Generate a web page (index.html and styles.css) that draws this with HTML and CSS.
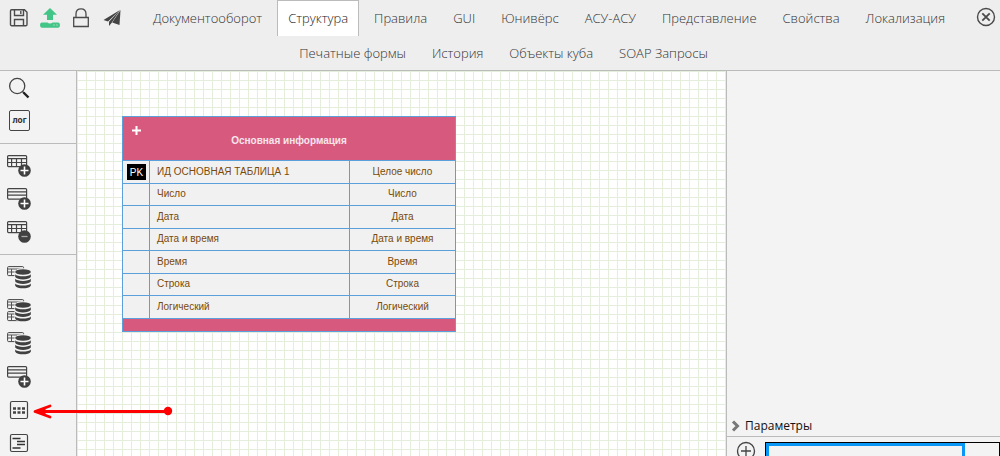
FILE: index.html
```
<!DOCTYPE html>
<html lang="ru">
<head>
<meta charset="utf-8">
<title>Структура</title>
<link rel="stylesheet" href="styles.css">
</head>
<body>
<svg class="defs" aria-hidden="true">
  <defs>
    <g id="grid-table" fill="none" stroke="#444" stroke-width="1.2">
      <rect x=".6" y="1.6" width="19" height="11" rx="1"/>
      <path d="M.6 4.6h19M.6 8.5h19M4.6 5v7.500M9.500 5v7.500M14.500 5v7.500"/>
    </g>
    <g id="row-table" fill="none" stroke="#444" stroke-width="1.2">
      <rect x=".6" y="1.6" width="19" height="10.500" rx="1"/>
      <path d="M.6 4.800h19M.6 8.200h19"/>
    </g>
    <g id="small-table">
      <rect x=".6" y=".6" width="16" height="9" rx="1" fill="#f3f3f3" stroke="#444"/>
      <path d="M.6 3h16M.6 6h16M4.500 3v6M9.500 3v6M13.500 3v6" fill="none" stroke="#555"/>
    </g>
    <g id="plus-badge">
      <circle cx="17.500" cy="16.500" r="6.300" fill="#404040"/>
      <path d="M17.500 12.500v8M13.500 16.500h8" stroke="#fff" stroke-width="1.600"/>
    </g>
    <g id="db">
      <path d="M7.500 6c0-5 16.500-5 16.500 0v13c0 5-16.500 5-16.500 0z" fill="#f3f3f3"/>
      <ellipse cx="16" cy="6" rx="7.800" ry="2.700" fill="#404040"/>
      <path d="M8.200 8.200c2 2.800 13.600 2.800 15.600 0v2.800c-2 3.300-13.600 3.300-15.600 0zM8.200 12.800c2 2.800 13.600 2.800 15.600 0v2.800c-2 3.300-13.600 3.300-15.600 0zM8.200 17.400c2 2.800 13.600 2.800 15.600 0v2.300c-2 3.500-13.600 3.500-15.600 0z" fill="#404040"/>
    </g>
  </defs>
</svg>
<header class="topbar">
  <div class="tools">
    <button class="tool" aria-label="Сохранить"><svg viewBox="0 0 20 20" width="20" height="20" fill="none" stroke="#4a4a4a" stroke-width="1.400"><path d="M2.500 1.700h13l2.500 2.500v12.200q0 1.300-1.300 1.300H2.800q-1.300 0-1.300-1.300V3q0-1.300 1-1.300zM5.500 2v5.500h9V2M11.800 3v3M5.500 17.500v-6h9v6"/></svg></button>
    <button class="tool" aria-label="Загрузить"><svg viewBox="0 0 20 20" width="20" height="20" fill="#43c588"><path d="M10 0l7 6.800h-4V12H7V6.800H3z"/><path fill-rule="evenodd" d="M1.800 14.500h5.700q.8 1 2.500 1t2.500-1h5.700q1.800 0 1.800 2.500t-1.800 2.700H1.800Q0 19.500 0 17t1.800-2.500zM13.500 16.500v1h1v-1zM16.500 16.500v1h1v-1z"/></svg></button>
    <button class="tool" aria-label="Заблокировать"><svg viewBox="0 0 20 20" width="20" height="20" fill="none" stroke="#4a4a4a" stroke-width="1.300"><path d="M2.700 9.500h14.600v9H2.700zM5 9.500V6C5 2.500 7 .8 10 .8S15 2.500 15 6v3.500"/></svg></button>
    <button class="tool" aria-label="Отправить"><svg viewBox="0 0 20 20" width="20" height="20" fill="#444"><path d="M18 2L1.500 12l4.500 1.600zM18 2L7 13.800V18l2.500-3z"/><path d="M18.500 2l-8.300 12.500 7.300 2.500z"/></svg></button>
  </div>
  <nav class="tabs">
    <a class="tab" href="#">Документооборот</a>
    <a class="tab active" href="#" aria-current="page">Структура</a>
    <a class="tab" href="#">Правила</a>
    <a class="tab" href="#">GUI</a>
    <a class="tab" href="#">Юнивёрс</a>
    <a class="tab" href="#">АСУ-АСУ</a>
    <a class="tab" href="#">Представление</a>
    <a class="tab" href="#">Свойства</a>
    <a class="tab" href="#">Локализация</a>
  </nav>
  <button class="tool close" aria-label="Закрыть"><svg viewBox="0 0 20 20" width="20" height="20" fill="none" stroke="#4a4a4a" stroke-width="1.400"><circle cx="10" cy="10" r="8.500"/><path d="M6.300 6.300l7.400 7.400M13.700 6.300l-7.400 7.400" stroke-width="1.800"/></svg></button>
  <nav class="tabs second">
    <a class="tab" href="#">Печатные формы</a>
    <a class="tab" href="#">История</a>
    <a class="tab" href="#">Объекты куба</a>
    <a class="tab" href="#">SOAP Запросы</a>
  </nav>
</header>
<main class="workspace">
  <aside class="sidebar">
    <div class="group">
      <button class="side" aria-label="Поиск"><svg viewBox="0 0 24 24" width="24" height="24" fill="none"><circle cx="10.200" cy="10" r="7.600" stroke="#444" stroke-width="1.300"/><path d="M15.500 15.500l1.500 1.500" stroke="#444" stroke-width="1.500"/><path d="M16.500 16.500l5 5" stroke="#222" stroke-width="2.400"/></svg></button>
      <button class="side"><span class="log">лог</span></button>
    </div>
    <div class="group">
      <button class="side" aria-label="Добавить таблицу"><svg viewBox="0 0 24 24" width="24" height="24"><use href="#grid-table"/><use href="#plus-badge"/></svg></button>
      <button class="side" aria-label="Добавить строку"><svg viewBox="0 0 24 24" width="24" height="24"><use href="#row-table"/><use href="#plus-badge"/></svg></button>
      <button class="side" aria-label="Удалить таблицу"><svg viewBox="0 0 24 24" width="24" height="24"><use href="#grid-table"/><circle cx="17.500" cy="16.500" r="6.300" fill="#404040"/><path d="M14.500 16.500h6" stroke="#aaa" stroke-width="1.300"/></svg></button>
    </div>
    <div class="group last">
      <button class="side" aria-label="Таблица из базы"><svg viewBox="0 0 24 24" width="24" height="24"><use href="#small-table"/><use href="#db"/></svg></button>
      <button class="side" aria-label="Таблицы из базы"><svg viewBox="0 0 24 24" width="24" height="24"><use href="#small-table"/><use href="#small-table" y="12"/><use href="#db"/></svg></button>
      <button class="side" aria-label="Таблица в базу"><svg viewBox="0 0 24 24" width="24" height="24"><use href="#small-table"/><use href="#db"/></svg></button>
      <button class="side" aria-label="Новая строка"><svg viewBox="0 0 24 24" width="24" height="24"><use href="#row-table"/><use href="#plus-badge"/></svg></button>
      <button class="side" aria-label="Сетка"><svg viewBox="0 0 24 24" width="24" height="24" fill="none"><rect x="3.500" y="3.500" width="17" height="17" rx="1.500" stroke="#444" stroke-width="1.200"/><path d="M6 10.500h12M6 14.500h12" stroke="#444" stroke-width="2.600" stroke-dasharray="3 1.500"/></svg></button>
      <button class="side" aria-label="Список"><svg viewBox="0 0 24 24" width="24" height="24" fill="none"><rect x="3.500" y="3.500" width="17" height="17" rx="1.500" stroke="#444" stroke-width="1.200"/><path d="M5.500 7.500h8M10 10.500h8M10 13.500h8M5.500 17h8" stroke="#333" stroke-width="1.300"/></svg></button>
    </div>
  </aside>
  <section class="canvas">
    <table class="entity">
      <colgroup><col class="c-key"><col><col class="c-type"></colgroup>
      <thead><tr><th colspan="3"><button class="expand" aria-label="Добавить поле"><svg viewBox="0 0 9 9" width="9" height="9"><path d="M4.500 0v9M0 4.500h9" stroke="#fff" stroke-width="2"/></svg></button>Основная информация</th></tr></thead>
      <tbody>
        <tr><td class="key"><span class="pk">PK</span></td><td>ИД ОСНОВНАЯ ТАБЛИЦА 1</td><td class="type">Целое число</td></tr>
        <tr><td></td><td>Число</td><td class="type">Число</td></tr>
        <tr><td></td><td>Дата</td><td class="type">Дата</td></tr>
        <tr><td></td><td>Дата и время</td><td class="type">Дата и время</td></tr>
        <tr><td></td><td>Время</td><td class="type">Время</td></tr>
        <tr><td></td><td>Строка</td><td class="type">Строка</td></tr>
        <tr><td></td><td>Логический</td><td class="type">Логический</td></tr>
      </tbody>
      <tfoot><tr><td colspan="3"></td></tr></tfoot>
    </table>
    <svg class="pointer" viewBox="0 0 140 16" width="140" height="16" fill="none" stroke="#f00" stroke-linecap="round" stroke-linejoin="round"><path d="M3 8.500h132" stroke-width="3"/><path d="M17 3L2 8.500 17 14" stroke-width="2.800"/><path d="M2 8.500l12-4-3 4 3 4z" fill="#f00" stroke="none"/><circle cx="135" cy="8" r="4.200" fill="#f00" stroke="none"/></svg>
  </section>
  <aside class="panel">
    <div class="preview"></div>
    <h2 class="params"><svg viewBox="0 0 10 12" width="10" height="12" fill="none" stroke="#777" stroke-width="3"><path d="M2 1.500L6.500 6 2 10.500"/></svg>Параметры</h2>
    <div class="fields">
      <button class="tool add" aria-label="Добавить параметр"><svg viewBox="0 0 20 20" width="20" height="20" fill="none" stroke="#444" stroke-width="1.300"><circle cx="10" cy="10" r="8.500"/><path d="M10 5v10M5 10h10"/></svg></button>
      <div class="sheet"><input class="cell" aria-label="Параметр"></div>
    </div>
  </aside>
</main>
</body>
</html>
```
FILE: styles.css
```
* { box-sizing: border-box; }

body {
  margin: 0;
  height: 100vh;
  display: flex;
  flex-direction: column;
  overflow: hidden;
  background: #eee;
  color: #555;
  font-family: "Open Sans", sans-serif;
  font-size: 13px;
}

button { padding: 0; border: 0; background: none; font: inherit; color: inherit; cursor: pointer; }
svg { display: block; }
.defs { position: absolute; width: 0; height: 0; }

.topbar {
  display: grid;
  grid-template-columns: auto 1fr auto;
  border-bottom: 1px solid #bbb;
}
.tools { display: flex; gap: 11px; padding: 8px 0 0 9px; align-items: flex-start; }
.close { align-self: start; margin: 7px 4px 0 0; }

.tabs { display: flex; justify-content: center; gap: 4px; }
.tabs.second { grid-column: 1 / -1; height: 34px; padding-left: 7px; }
.tabs.second .tab { line-height: 33px; }
.tab {
  height: 36px;
  padding: 0 10px;
  border: 1px solid transparent;
  border-bottom: 0;
  color: #333;
  font-weight: 300;
  line-height: 35px;
  text-decoration: none;
  white-space: nowrap;
}
.tab.active { background: #fff; border-color: #bbb; color: #222; }

.workspace { flex: 1; min-height: 0; display: flex; }

.sidebar { flex: 0 0 77px; background: #f3f3f3; border-right: 1px solid #bbb; overflow: hidden; }
.group { display: flex; flex-direction: column; padding: 5px 0 6px; border-bottom: 1px solid #bbb; }
.group:first-child { padding-top: 0; }
.group.last { padding: 6px 0 0; border: 0; }
.side { height: 33px; padding-left: 7px; display: flex; align-items: center; }
.log {
  width: 21px;
  height: 21px;
  margin-left: 2px;
  border: 1px solid #444;
  border-radius: 2px;
  font-family: Roboto, sans-serif;
  font-size: 9px;
  font-weight: 700;
  line-height: 18px;
  text-align: center;
  color: #333;
}

.canvas {
  position: relative;
  flex: 1;
  background-color: #fff;
  background-image: linear-gradient(#e5eedc 1px, transparent 1px), linear-gradient(90deg, #e5eedc 1px, transparent 1px);
  background-size: 9px 9px;
}

.entity {
  position: absolute;
  left: 45px;
  top: 45px;
  width: 334px;
  table-layout: fixed;
  border-collapse: collapse;
  background: #f1f1f1;
  color: #7a4a08;
  font: 10px "Liberation Sans", sans-serif;
}
.c-key { width: 27px; }
.c-type { width: 106px; }
.entity th, .entity td { border: 1px solid #5b9fdb; padding: 0 0 2px 7px; height: 22px; }
.entity tbody tr:nth-child(odd) td { height: 23px; }
.entity th { position: relative; height: 44px; padding: 3px 0 0; background: #d75a7e; color: #f6e6ec; }
.entity tfoot td { height: 13px; padding: 0; background: #d75a7e; }
.entity .type { padding-left: 0; text-align: center; }
.entity .key { padding: 0 0 0 4px; }
.pk { display: block; width: 19px; height: 16px; background: #000; color: #fff; line-height: 17px; text-align: center; }
.expand { position: absolute; left: 9px; top: 9px; }
.pointer { position: absolute; left: -44px; top: 332px; pointer-events: none; }

.panel { flex: 0 0 274px; display: flex; flex-direction: column; background: #f3f3f3; border-left: 1px solid #bbb; }
.preview { flex: 1; }
.params {
  display: flex;
  align-items: center;
  gap: 4px;
  height: 22px;
  margin: 0;
  padding: 0 0 0 4px;
  border-bottom: 1px solid #bbb;
  color: #111;
  font-size: 12px;
  font-weight: 400;
}
.fields { display: flex; gap: 9px; height: 19px; padding: 4px 0 0 9px; overflow: hidden; }
.sheet { flex: 1; height: 40px; margin-top: 1px; border: 1px solid #000; }
.cell { display: block; width: 199px; height: 38px; padding: 0; border: 3px solid #0a96f5; outline: 0; background: #f3f3f3; }
```
